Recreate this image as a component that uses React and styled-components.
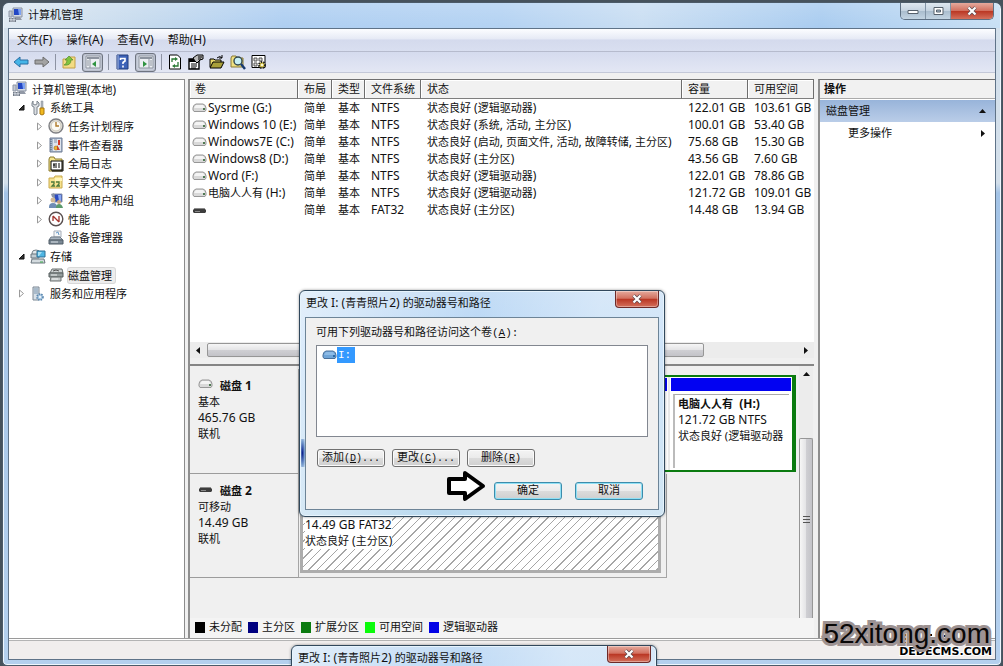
import React from 'react';
import styled, { createGlobalStyle, css } from 'styled-components';

const GlobalStyle = createGlobalStyle`
  * {
    box-sizing: border-box;
  }
  body {
    margin: 0;
    color: #111;
    font: 11px/16px 'Noto Sans', 'Noto Sans CJK SC', sans-serif;
  }
  button {
    padding: 0;
    border: 0;
    background: none;
    color: inherit;
    font: inherit;
  }
  svg {
    display: block;
    flex: none;
  }
  ul {
    margin: 0;
    padding: 0;
    list-style: none;
  }
`;

/* ---------- text ---------- */

const Latin = styled.span`
  font-size: 12px;
  line-height: 15px;
  white-space: pre;
`;

const Mono = styled.span`
  font-size: 10px;
`;

// Latin runs are set one size larger than the Chinese around them
const Label = ({ text }) => (
  <span>
    {text
      .split(/([\x20-\x7e]+)/)
      .filter(Boolean)
      .map((part, i) => (/^[\x20-\x7e]/.test(part) ? <Latin key={i}>{part}</Latin> : part))}
  </span>
);

/* ---------- window ---------- */

const Desktop = styled.div`
  position: relative;
  display: flex;
  height: 100vh;
  min-height: 600px;
  padding: 2px 1px 0 2px;
  overflow: hidden;
  background: #46525c;
`;

const Window = styled.div`
  display: flex;
  flex: 1;
  flex-direction: column;
  min-width: 0;
  padding: 0 5px 5px;
  border: 1px solid #4c5b69;
  border-radius: 7px 7px 5px 5px;
  background: linear-gradient(
    #d3e0ec 0,
    #d3dfea 180px,
    #a3c3e6 190px,
    #b4d0ee 100%
  );
  box-shadow: inset 0 0 0 1px #eef6fd;
`;

const TitleBar = styled.header`
  display: flex;
  align-items: flex-start;
  height: 25px;
  margin: 0 -4px;
  border-radius: 6px 6px 0 0;
  background: linear-gradient(rgba(255, 255, 255, 0.25), rgba(255, 255, 255, 0.1)),
    linear-gradient(
      90deg,
      #dbe6f0,
      #bfd6ec 14%,
      #a5c9f0 28%,
      #abcdf1 50%,
      #c3daf1 64%,
      #9fc6ee 82%,
      #c2dcf3
    );
`;

const Title = styled.h1`
  display: flex;
  flex: 1;
  gap: 4px;
  align-items: center;
  margin: 0;
  padding: 4px;
  font-size: 11px;
  font-weight: normal;
`;

const WindowButtons = styled.div`
  display: flex;
  margin-right: 6px;
  border: 1px solid #5d6f82;
  border-top: 0;
  border-radius: 0 0 5px 5px;
  overflow: hidden;
`;

const WindowButton = styled.button`
  display: flex;
  align-items: center;
  justify-content: center;
  width: 25px;
  height: 16px;
  border-right: 1px solid #8294a6;
  background: linear-gradient(#dfe8f0, #c5d3e0 48%, #a9bccd 50%, #c3d4e2);
  ${props =>
    props.$close &&
    css`
      width: 42px;
      border-right: 0;
      background: linear-gradient(#e5aa9d, #d2705f 48%, #b93522 50%, #d4705c);
    `}
`;

const Client = styled.div`
  display: flex;
  flex: 1;
  flex-direction: column;
  min-height: 0;
  border: 1px solid #5f7388;
  background: #f0f0f0;
`;

const MenuBar = styled.nav`
  display: flex;
  gap: 14px;
  align-items: center;
  height: 23px;
  padding: 0 8px;
  border-bottom: 1px solid #b6bbcd;
  background: linear-gradient(#fcfdff, #e6eaf5 45%, #d4daed 50%, #d9dff0);
`;

const ToolBar = styled.div`
  display: flex;
  gap: 5px;
  align-items: center;
  height: 21px;
  padding: 0 4px;
  border-bottom: 1px solid #c3c8d8;
  background: linear-gradient(#d5dbee, #e3e7f4);
`;

const Tool = styled.button`
  display: flex;
  align-items: center;
  justify-content: center;
  width: 16px;
  height: 18px;
  ${props =>
    props.$pressed &&
    css`
      width: 21px;
      height: 19px;
      border: 1px solid #6e7480;
      border-radius: 3px;
      background: #ccd1de;
      box-shadow: inset 0 0 2px #8c93a2;
    `}
`;

const ToolSeparator = styled.span`
  width: 1px;
  height: 16px;
  background: #8d93a3;
`;

const Panes = styled.div`
  display: grid;
  flex: 1;
  grid-template-columns: 176px minmax(0, 1fr) 177px;
  gap: 3px;
  min-height: 0;
  margin-top: 6px;
`;

const StatusBar = styled.footer`
  height: 21px;
  border-top: 1px solid #9a9a9a;
  box-shadow: inset 0 1px #fff, inset 0 2px #b4b4b4;
  background: #f1eeed;
`;

/* ---------- tree ---------- */

const TreePane = styled.aside`
  border-top: 1px solid #8b8b8b;
  border-right: 1px solid #8b8b8b;
  background: #fff;
`;

const TreeList = styled.ul`
  display: grid;
  grid-auto-rows: 1fr;
  height: 223px;
`;

const TreeRow = styled.li`
  display: flex;
  gap: 4px;
  align-items: center;
  padding-left: ${props => [3, 8, 26][props.$depth]}px;
`;

const Expander = styled.button`
  display: flex;
  justify-content: center;
  width: 9px;
  height: 9px;
`;

const TreeName = styled.span`
  padding-right: 3px;
  line-height: 15px;
  border-radius: 2px;
  ${props =>
    props.$selected &&
    css`
      background: #ededed;
      box-shadow: 0 0 0 1px #d8d8d8;
    `}
`;

/* ---------- volumes ---------- */

const Center = styled.main`
  display: flex;
  flex-direction: column;
  min-width: 0;
  min-height: 0;
  margin-right: 1px;
  border-top: 1px solid #6f6f6f;
  border-left: 2px solid #8e8e8e;
`;

const VolumePane = styled.section`
  display: flex;
  flex: none;
  flex-direction: column;
  height: 286px;
  padding-bottom: 6px;
  border-bottom: 2px solid #858585;
`;

const VolumeArea = styled.div`
  flex: 1;
  overflow: hidden;
  background: #fff;
`;

const VolumeTable = styled.table`
  width: 100%;
  border-collapse: separate;
  border-spacing: 0;
  table-layout: fixed;
  th,
  td {
    overflow: hidden;
    padding: 0 0 0 6px;
    text-align: left;
    white-space: nowrap;
  }
  th {
    height: 19px;
    border-right: 1px solid #6d6d6d;
    border-bottom: 1px solid #7e7e7e;
    background: #f1f1f1;
    box-shadow: inset 1px 1px #fff;
    font-weight: normal;
  }
  td {
    height: 17px;
    line-height: 15px;
  }
  th:first-child {
    padding-left: 5px;
  }
  td:first-child {
    padding-left: 2px;
  }
`;

const VolumeName = styled.span`
  display: flex;
  gap: 1px;
  align-items: center;
`;

const HScroll = styled.div`
  display: flex;
  align-items: center;
  height: 16px;
  padding: 0 4px;
  background: #ececec;
`;

const HThumb = styled.div`
  width: 497px;
  height: 14px;
  margin: 0 auto 0 4px;
  border: 1px solid #969696;
  border-radius: 2px;
  background: linear-gradient(#f6f6f6, #e4e4e6 48%, #cfcfd3 52%, #c3c3c8);
`;

/* ---------- disks ---------- */

const DiskPane = styled.section`
  display: flex;
  flex: 1;
  min-height: 0;
`;

const DiskList = styled.div`
  flex: 1;
  min-width: 0;
  padding-top: 3px;
`;

const DiskRow = styled.article`
  display: flex;
  height: ${props => (props.$last ? 104 : 105)}px;
`;

const DiskInfo = styled.div`
  flex: none;
  width: 109px;
  padding: 9px 8px;
  border-right: 1px solid #a5a5a5;
  border-bottom: 1px solid #9c9c9c;
  p {
    margin: 0;
  }
`;

const DiskName = styled.h2`
  display: flex;
  gap: 7px;
  align-items: center;
  margin: 0;
  font-size: 11px;
  svg {
    margin-bottom: 4px;
  }
`;

const DiskGraph = styled.div`
  flex: 1;
  min-width: 0;
  padding: 6px 3px 3px 1px;
`;

const RemovableGraph = styled.div`
  width: 368px;
  padding: 6px 5px 4px 1px;
  border-right: 1px solid #a5a5a5;
  border-bottom: 1px solid #a5a5a5;
`;

const Extended = styled.div`
  display: flex;
  gap: 2px;
  height: 97px;
  border: solid #0b7b10;
  border-width: 2px 4px 2px 2px;
  background: #e8e8e8;
`;

const Partition = styled.div`
  display: flex;
  flex: ${props => (props.$grow ? '1' : '0 0 122px')};
  flex-direction: column;
  min-width: 0;
  padding: 1px 1px 2px;
  background: #fff;
`;

const PartitionBar = styled.div`
  height: 13px;
  margin-bottom: 3px;
  background: #0202f2;
`;

const PartitionBody = styled.div`
  flex: 1;
  overflow: hidden;
  margin: 0 2px;
  padding: 1px 3px;
  border-top: 1px solid #aaa;
  border-left: 2px solid #bbb;
  white-space: nowrap;
  p {
    overflow: hidden;
    margin: 0;
    white-space: pre;
  }
`;

const Hatched = styled.div`
  height: 93px;
  padding: 34px 2px 0;
  border: 3px solid #adadad;
  background: repeating-linear-gradient(
    135deg,
    #fff 0,
    #fff 5px,
    #a6a6a6 5px,
    #a6a6a6 6px
  );
  p {
    width: max-content;
    margin: 0;
    background: #fff;
  }
`;

const VScroll = styled.div`
  display: flex;
  flex-direction: column;
  align-items: center;
  width: 14px;
  margin-right: 1px;
  padding-top: 4px;
  background: #ececec;
`;

const VThumb = styled.div`
  display: flex;
  flex: 1;
  align-items: center;
  justify-content: center;
  width: 14px;
  margin-top: 59px;
  padding-bottom: 18px;
  border: 1px solid #969696;
  border-bottom: 0;
  border-radius: 2px 2px 0 0;
  background: linear-gradient(90deg, #f6f6f6, #e4e4e6 48%, #cfcfd3 52%, #c3c3c8);
`;

const Legend = styled.ul`
  display: flex;
  gap: 6px;
  height: 20px;
  padding: 1px 5px 3px;
  background: #f4f4f4;
  li {
    display: flex;
    gap: 4px;
    align-items: center;
  }
`;

const Swatch = styled.span`
  width: 10px;
  height: 11px;
  background: ${props => props.$color};
`;

/* ---------- actions ---------- */

const ActionPane = styled.aside`
  border-top: 1px solid #6f6f6f;
  border-left: 2px solid #8e8e8e;
  background: #fff;
`;

const ActionTitle = styled.h2`
  height: 19px;
  margin: 0 0 1px;
  padding: 1px 4px;
  border-bottom: 1px solid #aaa;
  background: #f1f1f1;
  font-size: 11px;
`;

const ActionButton = styled.button`
  display: flex;
  align-items: center;
  justify-content: space-between;
  width: 100%;
  height: 22px;
  padding: 0 8px 0 ${props => (props.$group ? 6 : 28)}px;
  ${props =>
    props.$group &&
    css`
      background: linear-gradient(#98b4da, #bacde8);
    `}
`;

/* ---------- dialog ---------- */

const DialogFrame = styled.section`
  position: absolute;
  top: ${props => props.$top}px;
  left: ${props => props.$left}px;
  width: 366px;
  padding: 0 5px 6px;
  border: 1px solid #31485c;
  border-radius: 6px;
  background: radial-gradient(#0a1f8c, rgba(60, 110, 180, 0.6) 60%, transparent) 0
      148px / 5px 28px no-repeat,
    linear-gradient(
      100deg,
      rgba(255, 255, 255, 0.55),
      rgba(255, 255, 255, 0) 45%,
      rgba(255, 255, 255, 0.35) 75%
    ),
    linear-gradient(#c3dcf5 0, #b5d6f6 60px, #b8d8ee 100%);
  box-shadow: inset 0 0 0 1px #e7f4fd, 0 0 3px rgba(0, 0, 0, 0.4);
`;

const DialogTitle = styled.header`
  display: flex;
  align-items: flex-start;
  justify-content: space-between;
  height: 26px;
  h2 {
    margin: 0;
    padding: 4px 1px;
    font-size: 11px;
    font-weight: normal;
  }
`;

const CloseButton = styled.button`
  display: flex;
  align-items: center;
  justify-content: center;
  width: 44px;
  height: 17px;
  border: 1px solid #6d2a28;
  border-top: 0;
  border-radius: 0 0 4px 4px;
  background: linear-gradient(#e5aa9d, #d2705f 46%, #b93522 50%, #d4705c);
  box-shadow: inset 0 0 0 1px rgba(255, 255, 255, 0.35);
`;

const DialogBody = styled.div`
  padding: 7px 10px 9px;
  border: 1px solid #6d8497;
  background: #f0f0f0;
  font-family: 'Liberation Mono', 'Noto Sans CJK SC', monospace;
`;

const PathList = styled.ul`
  height: 92px;
  margin-top: 4px;
  padding: 1px 5px;
  border: 1px solid #828790;
  background: #fff;
`;

const PathItem = styled.li`
  display: flex;
  align-items: center;
  span {
    width: 18px;
    padding-left: 1px;
    background: #3399ff;
    color: #fff;
  }
`;

const ButtonRow = styled.div`
  display: flex;
  gap: ${props => (props.$end ? 13 : 7)}px;
  justify-content: ${props => (props.$end ? 'flex-end' : 'flex-start')};
  margin-top: ${props => (props.$end ? 15 : 12)}px;
  padding: 0 ${props => (props.$end ? 5 : 1)}px;
`;

const PushButton = styled.button`
  width: 68px;
  height: 18px;
  border: 1px solid ${props => (props.$primary ? '#3c8cab' : '#707070')};
  border-radius: 3px;
  background: linear-gradient(#f4f4f4, #ebebeb 48%, #dcdcdc 50%, #cfcfcf);
  box-shadow: inset 0 0 0 1px ${props => (props.$primary ? '#8fe0f5' : '#fafafa')};
  line-height: 16px;
`;

const Pointer = styled.svg`
  position: absolute;
  top: 469px;
  left: 446px;
`;

/* ---------- watermark ---------- */

const Watermark = styled.div`
  position: absolute;
  right: 13px;
  bottom: 18px;
  color: #0a0808;
  font: 28px/28px 'Liberation Sans', sans-serif;
  paint-order: stroke fill;
  -webkit-text-stroke: 6px #9d9292;
`;

const WatermarkNote = styled.div`
  position: absolute;
  right: 11px;
  bottom: 7px;
  color: #000;
  font: bold 11px/14px 'DejaVu Sans', sans-serif;
  paint-order: stroke fill;
  -webkit-text-stroke: 2px #fff;
`;

const WatermarkDots = styled.svg`
  position: absolute;
  right: 10px;
  bottom: 21px;
`;

/* ---------- icons ---------- */

const Svg = ({ w = 16, h = 16, children }) => (
  <svg width={w} height={h} viewBox={`0 0 ${w} ${h}`} aria-hidden="true">
    {children}
  </svg>
);

const ComputerIcon = () => (
  <Svg>
    <path d="M5 1h9v9H5z" fill="#d5dae2" stroke="#8992a3" />
    <path d="M6 2h7v6H6z" fill="#2347c4" />
    <path d="M10 2h3v6h-2z" fill="#7da2f2" />
    <path d="M1 4h3v6H1z" fill="#c3c9d3" stroke="#8f97a6" />
    <path d="M7 10h5l2 3H5z" fill="#9299a6" />
    <path d="M1 11h7v4H1z" fill="#727a87" />
    <path d="M2 12h2v1H2zM5 12h2v1H5zM2 14h5" fill="#dfe3ea" stroke="#c4cad3" />
  </Svg>
);

const ToolsIcon = () => (
  <Svg>
    <path
      d="M3 1v3l2 1 2-1V1l2 2v3L7 7v7l-2 1-1-1V7L2 6V3z"
      fill="#dcdfe3"
      stroke="#7d858e"
    />
    <path d="M11 1h2v7h-2z" fill="#aeb5bd" stroke="#868e97" strokeWidth=".5" />
    <path d="M10 8h4v6l-2 1-2-1z" fill="#f0b91f" stroke="#a9770e" />
  </Svg>
);

const ClockIcon = () => (
  <Svg>
    <circle cx="8" cy="8" r="7" fill="#e4e1d9" stroke="#7e7f83" strokeWidth="1.4" />
    <circle cx="8" cy="8" r="5" fill="#fbfaf4" stroke="#c9c6ba" />
    <path d="M8 4v4h3" fill="none" stroke="#b07b2a" strokeWidth="1.4" />
  </Svg>
);

const EventIcon = () => (
  <Svg>
    <path d="M2 1h12v14H2z" fill="#a7b7cc" stroke="#6e7d94" />
    <path d="M5 2h8v12H5z" fill="#dfe5ee" />
    <path d="M3 2v12" stroke="#4d5c74" strokeDasharray="1 1" />
    <path d="M6 3h3M6 5h3" stroke="#8391a8" />
    <path d="M10 3h2v5h-2z" fill="#d53a29" />
    <circle cx="8" cy="11" r="2" fill="#e9b632" stroke="#a8681a" strokeWidth=".6" />
    <path d="M9 8l3 5H9z" fill="#c9442f" />
  </Svg>
);

const LogIcon = () => (
  <Svg>
    <path d="M1 3l1-2h4l1 2h7v12H1z" fill="#f5e58d" stroke="#8b7a2f" />
    <path d="M3 5h11v9H3z" fill="#fff" stroke="#000" />
    <path d="M6 7v5M8 7v5M11 7v5M5 9h2" fill="none" stroke="#000" />
    <path d="M15 4v11H4" fill="none" stroke="#000" />
  </Svg>
);

const SharedIcon = () => (
  <Svg>
    <path d="M1 4h5l1-2h7v12H1z" fill="#f6e28d" stroke="#c9a94c" />
    <path d="M7 4h7v3H7z" fill="#fff5b8" />
    <path
      d="M3 8h3v2l-2 2h3M8 8h3v2l-2 2h3"
      fill="none"
      stroke="#4d7a3b"
      strokeWidth="1.3"
    />
  </Svg>
);

const UsersIcon = () => (
  <Svg>
    <path d="M6 1h8v8H6z" fill="#2b4bc1" stroke="#8b94a8" />
    <path d="M10 2h3v6h-2z" fill="#8aaaf3" />
    <circle cx="5" cy="7" r="2.5" fill="#cfb795" />
    <path d="M1 14q0-4 4-4t4 4v1H1z" fill="#6f8db5" />
    <circle cx="11" cy="9" r="2" fill="#c8a37c" />
    <path d="M8 15q0-4 3-4t4 4z" fill="#5b9a6c" />
    <path d="M3 1l3-1 1 5-3-1z" fill="#8a94a6" />
  </Svg>
);

const PerfIcon = () => (
  <Svg>
    <circle cx="8" cy="8" r="6.8" fill="#fff" stroke="#5a5050" strokeWidth="1.4" />
    <path
      d="M5 5v5M5 5l6 6M11 5v6"
      fill="none"
      stroke="#a3322c"
      strokeWidth="1.3"
    />
  </Svg>
);

const DeviceIcon = () => (
  <Svg>
    <path d="M6 1h7v6H6z" fill="#f4f6f8" stroke="#a5adb8" />
    <path d="M8 3l2-1 1 3" fill="none" stroke="#6699c7" />
    <path d="M3 7h9l3 3H1z" fill="#a9b4bf" stroke="#6f7b87" />
    <path d="M1 10h14v4H1z" fill="#7a8894" stroke="#515c66" />
    <path d="M3 12h7" stroke="#dbe2e8" />
  </Svg>
);

const StorageIcon = () => (
  <Svg>
    <ellipse cx="6" cy="4" rx="4" ry="3" fill="#e3e8ea" stroke="#77838b" />
    <path d="M1 5h8v4H1z" fill="#c2ccd2" stroke="#6b767e" />
    <path d="M7 2h8v6H7z" fill="#4fb6e3" stroke="#2f6e94" />
    <path d="M8 3h4l-3 4H8z" fill="#a7e0f5" />
    <path d="M2 10h12l1 4H1z" fill="#d4dbdf" stroke="#6b767e" />
    <path d="M10 13h3" stroke="#3fae4b" />
  </Svg>
);

const DiskMgmtIcon = () => (
  <Svg>
    <path d="M4 2h10l1 4H2z" fill="#cdd3d3" stroke="#6a7171" />
    <path d="M1 6h14v4H1z" fill="#949d9d" stroke="#555c5c" />
    <path d="M5 4q3-2 6 0" fill="none" stroke="#555" />
    <path d="M3 10h10v4H2z" fill="#c5caca" stroke="#6a7171" />
    <path d="M3 8h6M4 12h6" stroke="#eef1f1" />
  </Svg>
);

const ServicesIcon = () => (
  <Svg>
    <path d="M3 1h6v13H3z" fill="#d9e1e8" stroke="#7a8794" />
    <path d="M4 3h4M4 5h4M4 7h4" stroke="#7894ad" />
    <circle
      cx="10"
      cy="11"
      r="3"
      fill="#a9c8e2"
      stroke="#5a86ad"
      strokeDasharray="1.5 1"
      strokeWidth="1.6"
    />
    <circle cx="10" cy="11" r="1" fill="#fff" />
  </Svg>
);

const DriveIcon = ({ kind }) => {
  if (kind === 'removable') {
    return (
      <Svg w={15} h={10}>
        <path d="M3 3h9l2 2v2l-1 1H2L1 7V5z" fill="#3d3d3d" />
        <path d="M3 3h9l1 1H2z" fill="#8a8a8a" />
        <path d="M3 6.500h5" stroke="#888" />
      </Svg>
    );
  }
  const blue = kind === 'selected';
  return (
    <Svg w={15} h={10}>
      <path
        d="M4 1h7q3 1 3 4v2l-1 1.500H2L1 7V5q0-3 3-4z"
        fill={blue ? '#6fa5d8' : '#d9d9d9'}
        stroke={blue ? '#4a719b' : '#979797'}
      />
      <path d="M4 2h7l2 3H2z" fill={blue ? '#8dbbe6' : '#f4f4f4'} />
      <path d="M11 5h2v2h-2z" fill={blue ? '#2f6aa6' : '#4f7a52'} />
    </Svg>
  );
};

const BackIcon = () => (
  <Svg>
    <path d="M1 8l6-5v3h8v4H7v3z" fill="#45b5e8" stroke="#2a6fa4" />
  </Svg>
);

const ForwardIcon = () => (
  <Svg>
    <path d="M15 8L9 3v3H1v4h8v3z" fill="#a3a3a3" stroke="#6c6c6c" />
  </Svg>
);

const UpIcon = () => (
  <Svg>
    <path d="M2 5h5l1-2h6v11H2z" fill="#f3dc84" stroke="#c3a048" />
    <path
      d="M3 11q3-1 3-5H4l4-4 4 4h-2q0 6-7 5z"
      fill="#7fc33e"
      stroke="#438325"
      strokeWidth=".6"
    />
  </Svg>
);

const PaneIcon = ({ flip }) => (
  <Svg>
    <path d="M1 2h14v12H1z" fill="#eceff3" stroke="#8d949f" />
    <path d="M2 4h12" stroke="#8d949f" strokeWidth="2" />
    <path d={flip ? 'M11 5v9' : 'M5 5v9'} stroke="#8d949f" />
    <path
      d={flip ? 'M12 7h2M12 9h2M12 11h2' : 'M2 7h2M2 9h2M2 11h2'}
      stroke="#8d949f"
    />
    <path d={flip ? 'M5 7l4 3-4 3z' : 'M11 7l-4 3 4 3z'} fill="#2f9440" />
  </Svg>
);

const HelpIcon = () => (
  <Svg>
    <path d="M3 1h11v14H3z" fill="#3d62b8" stroke="#223c7c" />
    <path d="M4 1v14" stroke="#a9bbe2" />
    <path
      d="M6.500 6V4.500h4.500V7L9 8.500V10M9 11.500v2"
      fill="none"
      stroke="#fff"
      strokeWidth="1.6"
    />
  </Svg>
);

const RefreshIcon = () => (
  <Svg>
    <path d="M2.500 1h8l3 3v11h-11z" fill="#fff" stroke="#000" />
    <path d="M5 8V5h4M11 8v4H7" fill="none" stroke="#2a7a35" strokeWidth="1.3" />
    <path d="M8 3l3 2-3 2zM8 10l-3 2 3 2z" fill="#2a7a35" />
  </Svg>
);

const PropertiesIcon = () => (
  <Svg>
    <path d="M1 5h10v10H1z" fill="#fff" stroke="#000" strokeWidth="1.4" />
    <path d="M1 5h10v3H1z" />
    <path d="M3 10h6M3 12h6M3 14h5" stroke="#000" />
    <path d="M5 4l4-3h6v4l-3 1-3 3-2-2z" fill="#bbb" stroke="#000" />
    <path d="M10 3h4M10 5h3" stroke="#000" />
  </Svg>
);

const OpenIcon = () => (
  <Svg>
    <path d="M1 13V5h4l1 1h6v2" fill="#e9d96b" stroke="#000" />
    <path d="M1 14l3-6h11l-3 6z" fill="#a9a03a" stroke="#000" />
    <path d="M8 4q3-3 5 0m0-3v3h-3" fill="none" stroke="#000" />
  </Svg>
);

const SearchIcon = () => (
  <Svg>
    <path d="M1 4l1-2h4l1 2h6v9H1z" fill="#f0e080" stroke="#8a7a35" />
    <circle cx="8" cy="7" r="4" fill="#c8f0f5" stroke="#31464e" strokeWidth="1.4" />
    <path d="M11 10l4 5" stroke="#173a70" strokeWidth="2.4" />
  </Svg>
);

const SettingsIcon = () => (
  <Svg>
    <path d="M1 1.500h13v12H1z" fill="#fff" stroke="#000" />
    <path d="M3 4h3v3H3zM8 4h3v3H8zM3 9h3v3H3z" fill="#ddd" stroke="#555" />
    <circle
      cx="11"
      cy="11"
      r="3"
      fill="#e4d257"
      stroke="#222"
      strokeDasharray="1.500 1"
      strokeWidth="2"
    />
    <circle cx="11" cy="11" r="1" fill="#fff" />
  </Svg>
);

const CrossIcon = () => (
  <Svg w={12} h={10}>
    <path d="M2.500 1.500l7 7M9.500 1.500l-7 7" stroke="#5b4a50" strokeWidth="3.600" />
    <path d="M2.500 1.500l7 7M9.500 1.500l-7 7" stroke="#fff" strokeWidth="2.200" />
  </Svg>
);

const MinimizeIcon = () => (
  <Svg w={12} h={8}>
    <path d="M1 3.500h10v3H1z" fill="#fff" stroke="#56606b" />
  </Svg>
);

const MaximizeIcon = () => (
  <Svg w={11} h={9}>
    <path d="M1 .5h9v7H1z" fill="#fff" stroke="#56606b" />
    <path d="M3.500 3h4v2h-4z" fill="#a9bccd" stroke="#56606b" />
  </Svg>
);

const arrows = {
  left: 'M6 1L2 4.500 6 8z',
  right: 'M3 1l4 3.500L3 8z',
  up: 'M1 6l3.500-4L8 6z'
};

const ArrowIcon = ({ dir }) => (
  <Svg w={9} h={9}>
    <path d={arrows[dir]} fill="#111" />
  </Svg>
);

/* ---------- data ---------- */

const menus = ['文件(F)', '操作(A)', '查看(V)', '帮助(H)'];

const tree = [
  { name: '计算机管理(本地)', icon: ComputerIcon, depth: 0 },
  { name: '系统工具', icon: ToolsIcon, depth: 1, state: 'open' },
  { name: '任务计划程序', icon: ClockIcon, depth: 2, state: 'closed' },
  { name: '事件查看器', icon: EventIcon, depth: 2, state: 'closed' },
  { name: '全局日志', icon: LogIcon, depth: 2, state: 'closed' },
  { name: '共享文件夹', icon: SharedIcon, depth: 2, state: 'closed' },
  { name: '本地用户和组', icon: UsersIcon, depth: 2, state: 'closed' },
  { name: '性能', icon: PerfIcon, depth: 2, state: 'closed' },
  { name: '设备管理器', icon: DeviceIcon, depth: 2 },
  { name: '存储', icon: StorageIcon, depth: 1, state: 'open' },
  { name: '磁盘管理', icon: DiskMgmtIcon, depth: 2, selected: true },
  { name: '服务和应用程序', icon: ServicesIcon, depth: 1, state: 'closed' }
];

const columns = [
  { name: '卷', width: 108 },
  { name: '布局', width: 34 },
  { name: '类型', width: 33 },
  { name: '文件系统', width: 56 },
  { name: '状态' },
  { name: '容量', width: 66 },
  { name: '可用空间', width: 66 }
];

const volumes = [
  ['Sysrme (G:)', 'NTFS', '状态良好 (逻辑驱动器)', '122.01 GB', '103.61 GB'],
  ['Windows 10 (E:)', 'NTFS', '状态良好 (系统, 活动, 主分区)', '100.01 GB', '53.40 GB'],
  [
    'Windows7E (C:)',
    'NTFS',
    '状态良好 (启动, 页面文件, 活动, 故障转储, 主分区)',
    '75.68 GB',
    '15.30 GB'
  ],
  ['Windows8 (D:)', 'NTFS', '状态良好 (主分区)', '43.56 GB', '7.60 GB'],
  ['Word (F:)', 'NTFS', '状态良好 (逻辑驱动器)', '122.01 GB', '78.86 GB'],
  ['电脑人人有 (H:)', 'NTFS', '状态良好 (逻辑驱动器)', '121.72 GB', '109.01 GB'],
  ['', 'FAT32', '状态良好 (主分区)', '14.48 GB', '13.94 GB']
];

const legend = [
  ['未分配', '#000'],
  ['主分区', '#000080'],
  ['扩展分区', '#0b7b10'],
  ['可用空间', '#0bfb0b'],
  ['逻辑驱动器', '#0202e6']
];

/* ---------- parts ---------- */

const Tree = () => (
  <TreePane>
    <TreeList>
      {tree.map(({ name, icon: Icon, depth, state, selected }) => (
        <TreeRow key={name} $depth={depth}>
          {depth > 0 &&
            (state ? (
              <Expander aria-label={name} aria-expanded={state === 'open'}>
                <Svg w={9} h={9}>
                  {state === 'open' ? (
                    <path d="M7 2v5H2z" fill="#333" stroke="#111" />
                  ) : (
                    <path d="M2.500 1l4 3.500-4 3.500z" fill="#fff" stroke="#9a9a9a" />
                  )}
                </Svg>
              </Expander>
            ) : (
              <Expander as="span" />
            ))}
          <Icon />
          <TreeName $selected={selected}>
            <Label text={name} />
          </TreeName>
        </TreeRow>
      ))}
    </TreeList>
  </TreePane>
);

const Volumes = () => (
  <VolumePane>
    <VolumeArea>
      <VolumeTable>
        <colgroup>
          {columns.map(({ name, width }) => (
            <col key={name} width={width} />
          ))}
        </colgroup>
        <thead>
          <tr>
            {columns.map(({ name }) => (
              <th key={name}>{name}</th>
            ))}
          </tr>
        </thead>
        <tbody>
          {volumes.map(([name, fs, status, size, free]) => (
            <tr key={name}>
              <td>
                <VolumeName>
                  <DriveIcon kind={name ? 'fixed' : 'removable'} />
                  <Label text={name} />
                </VolumeName>
              </td>
              <td>简单</td>
              <td>基本</td>
              <td>
                <Label text={fs} />
              </td>
              <td>
                <Label text={status} />
              </td>
              <td>
                <Label text={size} />
              </td>
              <td>
                <Label text={free} />
              </td>
            </tr>
          ))}
        </tbody>
      </VolumeTable>
    </VolumeArea>
    <HScroll>
      <ArrowIcon dir="left" />
      <HThumb />
      <ArrowIcon dir="right" />
    </HScroll>
  </VolumePane>
);

const Disks = () => (
  <DiskPane>
    <DiskList>
      <DiskRow>
        <DiskInfo>
          <DiskName>
            <DriveIcon kind="fixed" />
            <Label text="磁盘 1" />
          </DiskName>
          <p>基本</p>
          <p>
            <Label text="465.76 GB" />
          </p>
          <p>联机</p>
        </DiskInfo>
        <DiskGraph>
          <Extended>
            <Partition $grow>
              <PartitionBar />
              <PartitionBody />
            </Partition>
            <Partition>
              <PartitionBar />
              <PartitionBody>
                <p>
                  <strong>
                    <Label text="电脑人人有  (H:)" />
                  </strong>
                </p>
                <p>
                  <Label text="121.72 GB NTFS" />
                </p>
                <p>状态良好 (逻辑驱动器</p>
              </PartitionBody>
            </Partition>
          </Extended>
        </DiskGraph>
      </DiskRow>
      <DiskRow $last>
        <DiskInfo>
          <DiskName>
            <DriveIcon kind="removable" />
            <Label text="磁盘 2" />
          </DiskName>
          <p>可移动</p>
          <p>
            <Label text="14.49 GB" />
          </p>
          <p>联机</p>
        </DiskInfo>
        <RemovableGraph>
          <Hatched>
            <p>
              <Label text="14.49 GB FAT32" />
            </p>
            <p>
              <Label text="状态良好 (主分区)" />
            </p>
          </Hatched>
        </RemovableGraph>
      </DiskRow>
    </DiskList>
    <VScroll>
      <ArrowIcon dir="up" />
      <VThumb>
        <Svg w={7} h={8}>
          <path d="M0 .5h7M0 3.500h7M0 6.500h7" stroke="#555" />
        </Svg>
      </VThumb>
    </VScroll>
  </DiskPane>
);

const Dialog = ({ left, top, children }) => (
  <DialogFrame role="dialog" $left={left} $top={top}>
    <DialogTitle>
      <h2>
        <Label text="更改 I: (青青照片2) 的驱动器号和路径" />
      </h2>
      <CloseButton aria-label="关闭">
        <CrossIcon />
      </CloseButton>
    </DialogTitle>
    <DialogBody>{children}</DialogBody>
  </DialogFrame>
);

const App = () => (
  <Desktop>
    <GlobalStyle />
    <Window>
      <TitleBar>
        <Title>
          <ComputerIcon />
          计算机管理
        </Title>
        <WindowButtons>
          <WindowButton aria-label="最小化">
            <MinimizeIcon />
          </WindowButton>
          <WindowButton aria-label="最大化">
            <MaximizeIcon />
          </WindowButton>
          <WindowButton aria-label="关闭" $close>
            <CrossIcon />
          </WindowButton>
        </WindowButtons>
      </TitleBar>
      <Client>
        <MenuBar>
          {menus.map(name => (
            <button key={name}>
              <Label text={name} />
            </button>
          ))}
        </MenuBar>
        <ToolBar>
          <Tool aria-label="后退">
            <BackIcon />
          </Tool>
          <Tool aria-label="前进">
            <ForwardIcon />
          </Tool>
          <ToolSeparator />
          <Tool aria-label="向上">
            <UpIcon />
          </Tool>
          <Tool aria-label="控制台树" $pressed>
            <PaneIcon />
          </Tool>
          <ToolSeparator />
          <Tool aria-label="帮助">
            <HelpIcon />
          </Tool>
          <Tool aria-label="操作窗格" $pressed>
            <PaneIcon flip />
          </Tool>
          <ToolSeparator />
          <Tool aria-label="刷新">
            <RefreshIcon />
          </Tool>
          <Tool aria-label="属性">
            <PropertiesIcon />
          </Tool>
          <Tool aria-label="打开">
            <OpenIcon />
          </Tool>
          <Tool aria-label="查找">
            <SearchIcon />
          </Tool>
          <Tool aria-label="设置">
            <SettingsIcon />
          </Tool>
        </ToolBar>
        <Panes>
          <Tree />
          <Center>
            <Volumes />
            <Disks />
            <Legend>
              {legend.map(([name, color]) => (
                <li key={name}>
                  <Swatch $color={color} />
                  {name}
                </li>
              ))}
            </Legend>
          </Center>
          <ActionPane>
            <ActionTitle>操作</ActionTitle>
            <ActionButton $group>
              磁盘管理
              <ArrowIcon dir="up" />
            </ActionButton>
            <ActionButton>
              更多操作
              <ArrowIcon dir="right" />
            </ActionButton>
          </ActionPane>
        </Panes>
        <StatusBar />
      </Client>
    </Window>
    <Dialog left={299} top={290}>
      <div id="paths-label">
        可用下列驱动器号和路径访问这个卷(<u>A</u>):
      </div>
      <PathList role="listbox" aria-labelledby="paths-label">
        <PathItem role="option" aria-selected="true">
          <DriveIcon kind="selected" />
          <span>I:</span>
        </PathItem>
      </PathList>
      <ButtonRow>
        <PushButton>
          添加
          <Mono>
            (<u>D</u>)...
          </Mono>
        </PushButton>
        <PushButton>
          更改
          <Mono>
            (<u>C</u>)...
          </Mono>
        </PushButton>
        <PushButton>
          删除
          <Mono>
            (<u>R</u>)
          </Mono>
        </PushButton>
      </ButtonRow>
      <ButtonRow $end>
        <PushButton $primary>确定</PushButton>
        <PushButton $primary>取消</PushButton>
      </ButtonRow>
    </Dialog>
    <Dialog left={291} top={645} />
    <Pointer width="40" height="34" viewBox="0 0 40 34" aria-hidden="true">
      <path
        d="M3 10h16V4l18 13-18 13v-6H3z"
        fill="#fff"
        stroke="#000"
        strokeWidth="4"
        strokeLinejoin="round"
      />
    </Pointer>
    <WatermarkDots width="90" height="12" viewBox="0 0 90 12" aria-hidden="true">
      <path
        d="M2 1v9M28 1v9M41 3h9M41 7h9M68 2v8M85 2v3M85 7v4M81 4h3"
        fill="none"
        stroke="#fff"
        strokeWidth="4"
      />
      <path
        d="M2 1v9M28 1v9M41 3h9M41 7h9M68 2v8M85 2v3M85 7v4M81 4h3"
        fill="none"
        stroke="#000"
        strokeWidth="2"
        strokeDasharray="2 2"
      />
    </WatermarkDots>
    <WatermarkNote>DEDECMS.COM</WatermarkNote>
    <Watermark>52xitong.com</Watermark>
  </Desktop>
);

export default App;
